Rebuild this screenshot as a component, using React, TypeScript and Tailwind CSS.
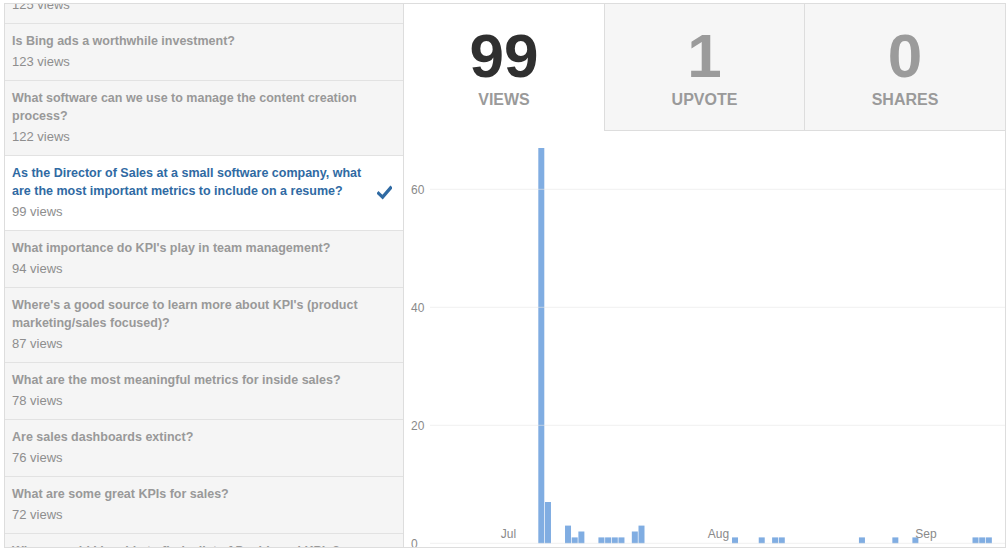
import { Fragment } from "react";

const questions = [
  { title: "How do you measure the ROI of sales enablement?", views: 125 },
  { title: "Is Bing ads a worthwhile investment?", views: 123 },
  { title: "What software can we use to manage the content creation process?", views: 122 },
  {
    title: "As the Director of Sales at a small software company, what are the most important metrics to include on a resume?",
    views: 99,
    selected: true,
  },
  { title: "What importance do KPI's play in team management?", views: 94 },
  { title: "Where's a good source to learn more about KPI's (product marketing/sales focused)?", views: 87 },
  { title: "What are the most meaningful metrics for inside sales?", views: 78 },
  { title: "Are sales dashboards extinct?", views: 76 },
  { title: "What are some great KPIs for sales?", views: 72 },
  { title: "Where would I be able to find a list of Dashboard KPIs?", views: 70 },
];

// [day slot, views]
const bars: [number, number][] = [
  [0, 67], [1, 7], [4, 3], [5, 1], [6, 2], [9, 1], [10, 1], [11, 1], [12, 1], [14, 2], [15, 3],
  [29, 1], [33, 1], [35, 1], [36, 1], [48, 1], [53, 1], [56, 1], [65, 1], [66, 1], [67, 1],
];

function CheckMark() {
  return (
    <svg width="15" height="15" viewBox="0 0 15 15" className="shrink-0">
      <path d="M1.6 8.3 5.6 12.1 13.6 2.8" fill="none" stroke="#2f6aa3" strokeWidth="3.2" strokeLinecap="square" />
    </svg>
  );
}

function Stat({ value, label, active }: { value: string; label: string; active?: boolean }) {
  return (
    <div
      className={`flex flex-col items-center pt-[21px] ${
        active ? "bg-white" : "border-l border-b border-[#dddddd] bg-[#f6f6f6]"
      } ${label === "Shares" ? "flex-1" : "w-[200px]"}`}
    >
      <div className={`text-[62px] leading-[62px] font-bold ${active ? "text-[#2f2f2f]" : "text-[#9b9b9b]"}`}>{value}</div>
      <div className="mt-[5px] text-[16px] leading-[16px] font-bold uppercase text-[#9a9a9a]">{label}</div>
    </div>
  );
}

function Chart() {
  const x0 = 134.3;
  const slot = 6.68;
  const base = 412.3;
  const unit = 5.9;
  return (
    <svg width={601} height={416} className="block">
      {bars.map(([k, v]) => (
        <rect key={k} x={x0 + k * slot} y={base - v * unit} width={6} height={v * unit} fill="#80ade2" />
      ))}
      {[60, 40, 20, 0].map(v => {
        const y = base - v * unit;
        return (
          <Fragment key={v}>
            <line x1={26} x2={601} y1={y} y2={y} stroke="#e6e6e6" strokeOpacity={0.6} />
            <text x={7} y={y + 4.3} fontSize={12} fill="#8a8a8a">{v}</text>
          </Fragment>
        );
      })}
      <text x={104.5} y={407.3} fontSize={12} fill="#8a8a8a" textAnchor="middle">Jul</text>
      <text x={314.5} y={407.3} fontSize={12} fill="#8a8a8a" textAnchor="middle">Aug</text>
      <text x={522} y={407.3} fontSize={12} fill="#8a8a8a" textAnchor="middle">Sep</text>
    </svg>
  );
}

export default function App() {
  return (
    <div className="w-[1008px] h-[552px] bg-white pt-[3px] pl-[4px] font-['Liberation_Sans',Arial,sans-serif]">
      <div className="flex w-[1002px] h-[545px] border border-[#dddddd] overflow-hidden">
        {/* question list, scrolled */}
        <aside className="w-[399px] shrink-0 h-full overflow-hidden bg-[#f5f5f5] border-r border-[#dddddd]">
          <ul className="mt-[-37px]">
            {questions.map(q => (
              <li
                key={q.title}
                className={`flex items-center pl-[7px] pr-[11px] pt-[8px] pb-[9px] border-b border-[#e2e2e2] ${
                  q.selected ? "bg-white" : ""
                }`}
              >
                <div className="flex-1 min-w-0">
                  <div
                    className={`text-[12.5px] leading-[18px] font-bold ${q.selected ? "text-[#2f6aa3]" : "text-[#999999]"}`}
                  >
                    {q.title}
                  </div>
                  <div className="mt-[3px] text-[13px] leading-[18px] text-[#8e8e8e]">{q.views} views</div>
                </div>
                {q.selected && (
                  <div className="ml-[5px]">
                    <CheckMark />
                  </div>
                )}
              </li>
            ))}
          </ul>
        </aside>

        <main className="flex-1 flex flex-col">
          <div className="flex h-[127px] shrink-0">
            <Stat value="99" label="Views" active />
            <Stat value="1" label="Upvote" />
            <Stat value="0" label="Shares" />
          </div>
          <Chart />
        </main>
      </div>
    </div>
  );
}
